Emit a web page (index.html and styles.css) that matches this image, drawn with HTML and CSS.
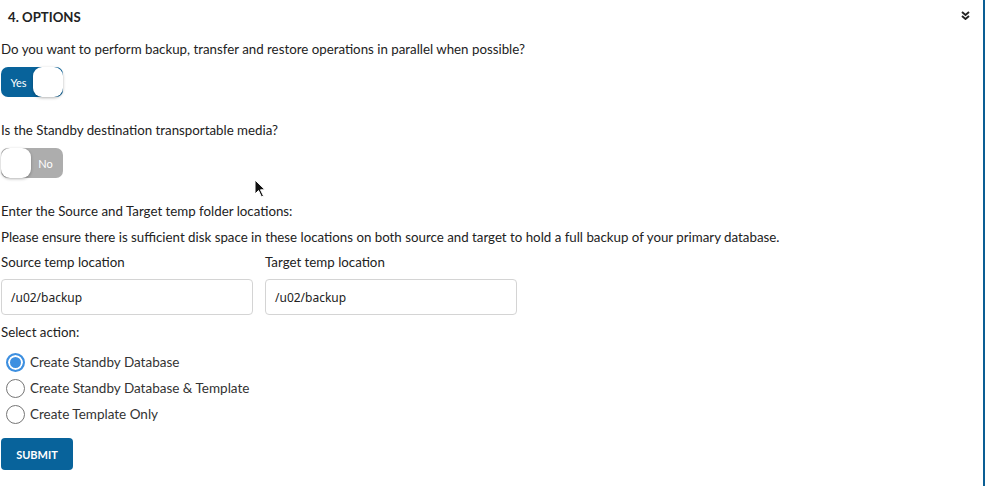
FILE: index.html
```html
<!DOCTYPE html>
<html>
<head>
<meta charset="utf-8">
<link rel="stylesheet" href="styles.css">
</head>
<body>
<div class="panel">
  <div class="header">
    <span class="title">4. OPTIONS</span>
    <svg class="chev" width="9" height="9" viewBox="0 0 9 9"><path d="M1 1 L4.5 4 L8 1 M1 5 L4.5 8 L8 5" fill="none" stroke="#222" stroke-width="1.9"/></svg>
  </div>
  <p class="q first">Do you want to perform backup, transfer and restore operations in parallel when possible?</p>
  <div class="toggle on"><span class="tlabel">Yes</span><span class="knob"></span></div>
  <p class="q sec">Is the Standby destination transportable media?</p>
  <div class="toggle off"><span class="knob"></span><span class="tlabel">No</span></div>
  <p class="q sec">Enter the Source and Target temp folder locations:</p>
  <p class="q tight">Please ensure there is sufficient disk space in these locations on both source and target to hold a full backup of your primary database.</p>
  <div class="fields">
    <label class="field">
      <span class="flabel">Source temp location</span>
      <span class="input">/u02/backup</span>
    </label>
    <label class="field">
      <span class="flabel">Target temp location</span>
      <span class="input">/u02/backup</span>
    </label>
  </div>
  <p class="q act">Select action:</p>
  <div class="radios">
    <div class="radio sel"><span class="dot"></span>Create Standby Database</div>
    <div class="radio"><span class="dot"></span>Create Standby Database &amp; Template</div>
    <div class="radio"><span class="dot"></span>Create Template Only</div>
  </div>
  <button class="submit">SUBMIT</button>
  <svg class="cursor" width="14" height="20" viewBox="0 0 14 20"><path d="M1 1 L1 15 L4.5 11.5 L7.5 18 L9.5 17 L6.5 10.8 L11 10.8 Z" fill="#111" stroke="#fff" stroke-width="1"/></svg>
</div>
</body>
</html>
```
FILE: styles.css
```css
html, body {
  margin: 0;
  padding: 0;
  background: #fff;
}
body {
  font-family: Lato, "Liberation Sans", sans-serif;
  color: #222;
  font-size: 13.3px;
}
.panel {
  position: relative;
  box-sizing: border-box;
  width: 985px;
  height: 486px;
  padding-left: 1px;
  border-right: 2px solid #0a5e94;
}
.header {
  height: 34px;
  display: flex;
  align-items: center;
  justify-content: space-between;
  padding-left: 7px;
  padding-right: 13px;
}
.title {
  font-weight: 700;
  font-size: 13.2px;
  color: #222;
  margin-top: -1px;
}
.chev { margin-top: -4px; }
.q {
  margin: 0;
  line-height: 18px;
  font-size: 13.3px;
}
.q.first { margin-top: 6px; }
.q.sec { margin-top: 24px; }
.q.tight { margin-top: 8px; }
.q.act { margin-top: 8px; }
.toggle {
  margin-top: 9px;
  width: 62px;
  height: 30px;
  border-radius: 7px;
  display: flex;
  align-items: center;
  box-sizing: border-box;
  font-size: 11px;
  color: #fff;
}
.toggle.on { background: #08639b; padding-left: 3px; }
.toggle.off { background: #adadad; padding-right: 3px; }
.knob {
  width: 30px;
  height: 30px;
  border-radius: 9px;
  background: #fff;
  box-shadow: 0 1px 3px rgba(0,0,0,0.3);
}
.tlabel {
  flex: 1;
  text-align: center;
}
.fields {
  margin-top: 7px;
  display: flex;
  gap: 12px;
}
.field {
  display: flex;
  flex-direction: column;
}
.flabel {
  line-height: 18px;
}
.input {
  margin-top: 8px;
  box-sizing: border-box;
  width: 252px;
  height: 36px;
  border: 1px solid #d4d4d4;
  border-radius: 4px;
  padding-left: 9px;
  display: flex;
  align-items: center;
  font-family: "Noto Sans", "Open Sans", sans-serif;
  font-size: 12px;
  color: #222;
}
.radios {
  margin-top: 8px;
  display: flex;
  flex-direction: column;
}
.radio {
  height: 26px;
  display: flex;
  align-items: center;
  font-size: 13.5px;
  color: #333;
}
.dot {
  box-sizing: border-box;
  width: 19px;
  height: 19px;
  border-radius: 50%;
  border: 1.5px solid #767676;
  margin-left: 5px;
  margin-right: 5px;
}
.radio.sel .dot {
  border: 2px solid #3d8fe0;
  background: #3d8fe0;
  box-shadow: inset 0 0 0 2px #fff;
}
.submit {
  margin-top: 11px;
  width: 72px;
  height: 32px;
  background: #08639b;
  color: #fff;
  border: none;
  border-radius: 4px;
  font-family: Lato, sans-serif;
  font-weight: 700;
  font-size: 11px;
  padding: 0;
  display: block;
}
.cursor {
  position: absolute;
  left: 254px;
  top: 179px;
}
```
